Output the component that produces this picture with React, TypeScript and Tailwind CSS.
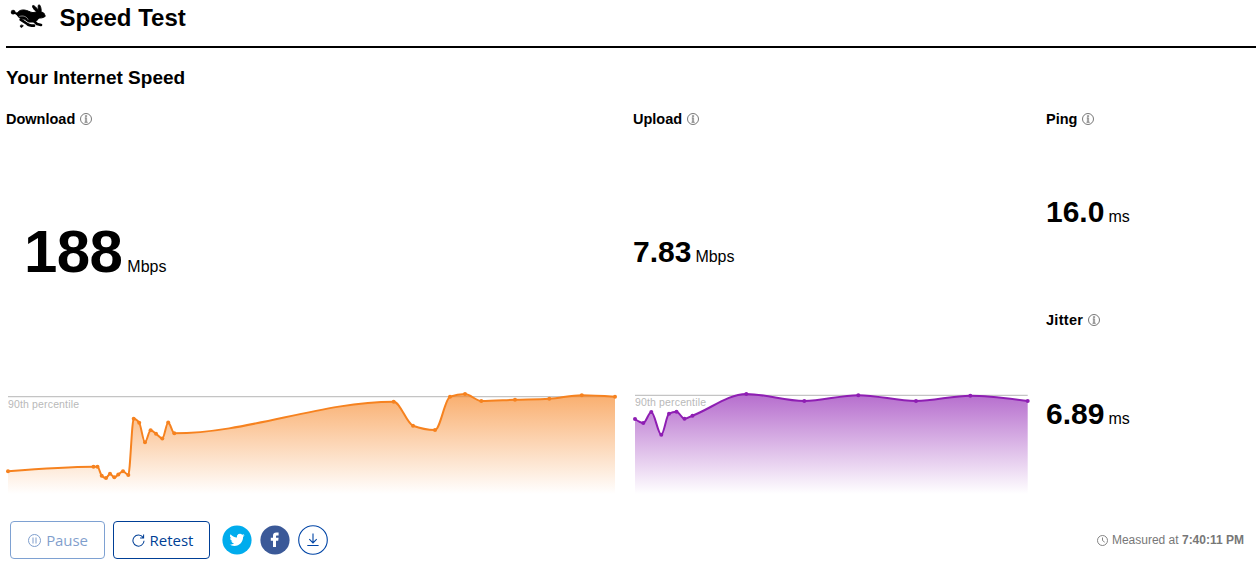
import React from "react";

type Point = [number, number];

const download: Point[] = [
  [8, 471.3], [93.5, 466.7], [97.5, 466.7], [101.7, 475.7], [106, 478], [110, 473.8], [114.3, 477.3],
  [118.3, 474.5], [123, 471.3], [128.3, 475], [133.7, 418.7], [139.2, 422.8], [145, 442.3], [150.6, 430.3],
  [156, 433.7], [162.3, 438.5], [168.2, 422.6], [174.3, 433.3], [393.7, 401.7], [413, 425.8], [435, 430],
  [450, 396.8], [465, 394], [481.3, 401], [515, 399.8], [549.3, 398.8], [581.8, 395.2], [615, 396.7],
];

const upload: Point[] = [
  [635, 419], [643.3, 423], [651.3, 412], [661.3, 434.7], [669, 413.7], [676.5, 411.8], [684.5, 418.7],
  [692.5, 415.7], [746.3, 394], [804.3, 401], [858.3, 395.2], [916, 401], [970.3, 395.7], [1027.7, 401],
];

// Monotone cubic interpolation through the samples.
function curve(p: Point[]): string {
  const n = p.length;
  const h = p.slice(1).map((q, i) => q[0] - p[i][0]);
  const s = p.slice(1).map((q, i) => (q[1] - p[i][1]) / h[i]);
  const m: number[] = new Array(n).fill(0);
  for (let i = 1; i < n - 1; i++) {
    const a = s[i - 1];
    const b = s[i];
    const avg = (a * h[i] + b * h[i - 1]) / (h[i - 1] + h[i]);
    m[i] = (Math.sign(a) + Math.sign(b)) * Math.min(Math.abs(a), Math.abs(b), 0.5 * Math.abs(avg)) || 0;
  }
  m[0] = (3 * s[0] - m[1]) / 2;
  m[n - 1] = (3 * s[n - 2] - m[n - 2]) / 2;
  let d = `M${p[0][0]},${p[0][1]}`;
  for (let i = 0; i < n - 1; i++) {
    const t = h[i] / 3;
    d += `C${p[i][0] + t},${p[i][1] + m[i] * t} ${p[i + 1][0] - t},${p[i + 1][1] - m[i + 1] * t} ${p[i + 1][0]},${p[i + 1][1]}`;
  }
  return d;
}

function Chart({ id, points, color, left, width, line, labelY }: {
  id: string; points: Point[]; color: string; left: number; width: number; line: number; labelY: number;
}) {
  const d = curve(points);
  const x0 = points[0][0];
  const x1 = points[points.length - 1][0];
  return (
    <svg className="block shrink-0" width={width} height={110} viewBox={`${left} 387 ${width} 110`}>
      <defs>
        <linearGradient id={id} gradientUnits="userSpaceOnUse" x1="0" y1="394" x2="0" y2="494">
          <stop offset="0" stopColor={color} stopOpacity="0.65" />
          <stop offset="1" stopColor={color} stopOpacity="0" />
        </linearGradient>
      </defs>
      <path d={`M${x0},${line}H${x1}`} stroke="#c4c4c4" strokeWidth="1.3" />
      <path d={`${d}L${x1},494L${x0},494Z`} fill={`url(#${id})`} />
      <text x={x0} y={labelY} fill="#b9b9b9" className="font-['Liberation_Sans',Arial,sans-serif] text-[10.5px]" textLength="71">90th percentile</text>
      <path d={d} fill="none" stroke={color} strokeWidth="2" strokeLinejoin="round" />
      {points.map(([x, y]) => <circle key={x} cx={x} cy={y} r="2" fill={color} />)}
    </svg>
  );
}

function Rabbit() {
  return (
    <svg className="block h-[34px] w-[50px]" viewBox="0 0 150 102" fill="#000" stroke="#000" strokeLinejoin="round" strokeLinecap="round">
      <circle cx="27.5" cy="36.5" r="6.5" />
      <path strokeWidth="3" d="M30 38L40 39C44 32 52 29 61 30C71 31 78 37 87 38L97 36L108 36C118 36 121 40 122 44C125 48 123 51 119 52C115 54 110 54 105 54C102 60 96 63 89 66L74 66L62 58C50 57 42 52 39 45Z" />
      <path strokeWidth="3" d="M100 37C90 30 84 21 86 17C89 14 99 24 106 35C101 23 102 15 105 14C109 15 113 27 111 38Z" />
      <path strokeWidth="8" fill="none" d="M50 59L70 72Q75 77 90 77M88 61L99 72L111 75" />
      <path strokeWidth="2" d="M54 75L58 77L54 82C50 83 48 80 49 77Z" />
      <path d="M47 49C57 46 68 49 72 58" fill="none" stroke="#fff" strokeWidth="1.6" />
    </svg>
  );
}

function InfoIcon() {
  return (
    <svg className="block size-3" viewBox="0 0 12 12" fill="none" stroke="#555" strokeWidth="0.8">
      <circle cx="6" cy="6" r="5.5" />
      <path d="M4.8 4.8H6.6V9.3M4.5 9.3H7.8M5.4 2.6H6.7V3.5H5.4ZM5.4 4.8V9.3" strokeWidth="0.6" />
    </svg>
  );
}

function Label({ children }: { children: React.ReactNode }) {
  return (
    <h3 className="flex h-[18px] items-center gap-[5px] text-[14.5px] leading-[18px] font-bold">
      {children}
      <InfoIcon />
    </h3>
  );
}

function Value({ value, unit }: { value: string; unit: string }) {
  return (
    <div className="flex items-baseline gap-1 leading-9">
      <span className="text-[30px] font-bold">{value}</span>
      <span className="text-base">{unit}</span>
    </div>
  );
}

export default function App() {
  return (
    <main className="h-[577px] w-[1256px] overflow-hidden bg-white pl-1.5 font-['Liberation_Sans',Arial,sans-serif] text-black">
      <header className="flex h-12 items-start border-b-2 border-black">
        <div className="-ml-0.5"><Rabbit /></div>
        <h1 className="ml-[5.5px] pt-[3px] text-2xl leading-[30px] font-bold">Speed Test</h1>
      </header>
      <h2 className="h-[62px] pt-[18px] text-[19px] leading-6 font-bold">Your Internet Speed</h2>

      <div className="flex h-[387px]">
        <section className="flex w-[627px] flex-col">
          <Label>Download</Label>
          <div className="flex h-[259px] items-baseline gap-[5px] pt-[88px] pl-[18px]">
            <span className="text-[60px] leading-[72px] font-bold tracking-[-0.6px]">188</span>
            <span className="text-base">Mbps</span>
          </div>
          <Chart id="download-fill" points={download} color="#f6821f" left={6} width={620} line={396.7} labelY={408} />
        </section>
        <section className="flex w-[413px] flex-col">
          <Label>Upload</Label>
          <div className="h-[259px] pt-[106px]"><Value value="7.83" unit="Mbps" /></div>
          <Chart id="upload-fill" points={upload} color="#8e1eb3" left={633} width={405} line={395.3} labelY={406} />
        </section>
        <section className="flex flex-col">
          <Label>Ping</Label>
          <div className="h-[183px] pt-[66px]"><Value value="16.0" unit="ms" /></div>
          <Label><span className="tracking-[0.3px]">Jitter</span></Label>
          <div className="pt-[67px]"><Value value="6.89" unit="ms" /></div>
        </section>
      </div>

      <footer className="flex h-[86px] items-center justify-between pr-3 pl-1">
        <div className="flex items-center font-['Open_Sans',sans-serif] text-[#003f96]">
          <button className="flex h-[38px] w-[95px] items-center justify-center gap-[5px] rounded-[4px] border border-[#0045a6] pl-px text-[15px] text-[#003f9c] opacity-50">
            <svg className="size-[13px]" viewBox="0 0 13 13" fill="none" stroke="currentColor">
              <circle cx="6.5" cy="6.5" r="6" />
              <path d="M5 3.5V9.5M8 3.5V9.5" />
            </svg>
            <span className="tracking-[-0.1px]">Pause</span>
          </button>
          <button className="ml-2 flex h-[38px] w-[97px] items-center justify-center gap-[5px] rounded-[4px] border border-[#003f96] pl-0.5 text-[15px]">
            <svg className="size-[13px]" viewBox="0 0 14 14" fill="none" stroke="currentColor" strokeWidth="1.1">
              <path d="M11.9 3.6A6 6 0 1 0 13 7.3M12.5 .5V4.2H8.7" />
            </svg>
            Retest
          </button>
          <svg className="ml-3 size-[30px]" viewBox="0 0 30 30">
            <circle cx="15" cy="15" r="14.6" fill="#00aced" />
            <path transform="translate(7.5 7.3) scale(.63)" fill="#fff" d="M23.95 4.57a10 10 0 0 1-2.82.77 4.96 4.96 0 0 0 2.16-2.72c-.95.55-2 .96-3.13 1.18a4.92 4.92 0 0 0-8.38 4.48C7.69 8.1 4.07 6.13 1.64 3.16a4.92 4.92 0 0 0 1.52 6.57 4.9 4.9 0 0 1-2.23-.61v.06a4.92 4.92 0 0 0 3.95 4.83 5 5 0 0 1-2.21.08 4.94 4.94 0 0 0 4.6 3.42A9.87 9.87 0 0 1 0 19.54a14 14 0 0 0 7.55 2.21c9.05 0 14-7.5 14-13.98 0-.21 0-.42-.02-.63a10 10 0 0 0 2.42-2.57Z" />
          </svg>
          <svg className="ml-2 size-[30px]" viewBox="0 0 30 30">
            <circle cx="15" cy="15" r="14.6" fill="#3b5998" />
            <path fill="#fff" d="M13 22V15.8H10.8V12.8H13V10.5C13 8.5 14.3 7.5 16.3 7.5H18.6V10.4H17C16.2 10.4 16 10.8 16 11.5V12.8H18.6L18.2 15.8H16V22Z" />
          </svg>
          <svg className="ml-2 size-[30px]" viewBox="0 0 30 30" fill="none" stroke="#0045a6" strokeWidth="1.1">
            <circle cx="15" cy="15" r="14.3" />
            <path d="M15 8.5V17.7M11.3 14.2L15 17.9L18.7 14.2M9.3 20.5H20.6" />
          </svg>
        </div>
        <div className="flex items-center gap-1 text-xs text-[#777]">
          <svg className="size-[11px]" viewBox="0 0 11 11" fill="none" stroke="currentColor" strokeWidth="0.9">
            <circle cx="5.5" cy="5.5" r="5" />
            <path d="M5.5 2.5V5.5L7.7 7.2" />
          </svg>
          <span>Measured at <b>7:40:11 PM</b></span>
        </div>
      </footer>
    </main>
  );
}
